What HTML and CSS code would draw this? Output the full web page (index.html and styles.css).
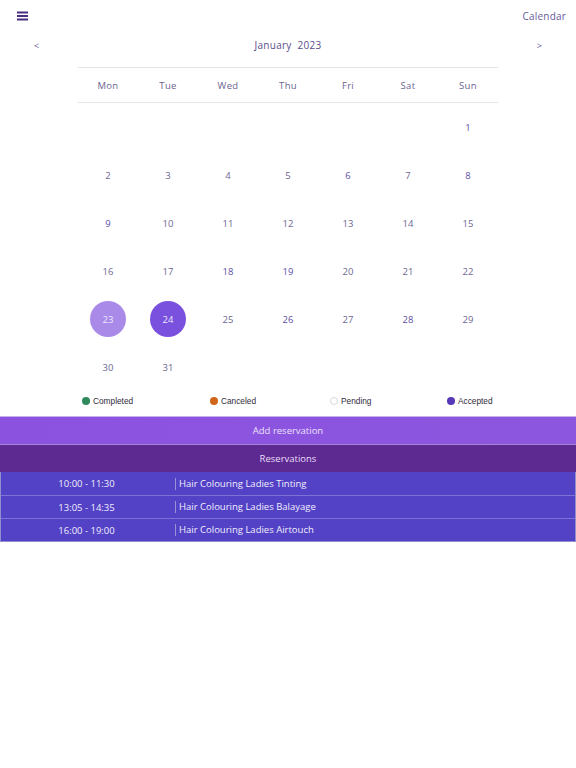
FILE: index.html
```html
<!DOCTYPE html>
<html>
<head>
<meta charset="utf-8">
<link rel="stylesheet" href="styles.css">
</head>
<body>
<header class="topbar">
  <svg class="menu" width="12" height="10" viewBox="0 0 12 10"><rect x="0" y="0.5" width="11" height="2" fill="#4b2f80"/><rect x="0" y="4" width="11" height="2" fill="#4b2f80"/><rect x="0" y="7.5" width="11" height="2" fill="#4b2f80"/></svg>
  <span class="title">Calendar</span>
</header>
<div class="monthnav">
  <span class="arrow">&lt;</span>
  <span class="month">January&nbsp;&nbsp;2023</span>
  <span class="arrow">&gt;</span>
</div>
<div class="cal">
  <div class="head">
    <span>Mon</span><span>Tue</span><span>Wed</span><span>Thu</span><span>Fri</span><span>Sat</span><span>Sun</span>
  </div>
  <div class="days">
    <span></span><span></span><span></span><span></span><span></span><span></span><span class="p">1</span>
    <span>2</span><span>3</span><span>4</span><span>5</span><span class="p">6</span><span>7</span><span class="p">8</span>
    <span class="p">9</span><span>10</span><span>11</span><span>12</span><span>13</span><span>14</span><span>15</span>
    <span>16</span><span>17</span><span class="p">18</span><span class="p">19</span><span>20</span><span>21</span><span>22</span>
    <span><i class="sel light">23</i></span><span><i class="sel dark">24</i></span><span>25</span><span class="p">26</span><span>27</span><span class="p">28</span><span>29</span>
    <span>30</span><span>31</span><span></span><span></span><span></span><span></span><span></span>
  </div>
</div>
<div class="legend">
  <span class="item"><i class="dot green"></i>Completed</span>
  <span class="item"><i class="dot orange"></i>Canceled</span>
  <span class="item"><i class="dot white"></i>Pending</span>
  <span class="item"><i class="dot blue"></i>Accepted</span>
</div>
<div class="addbar">Add reservation</div>
<div class="resbar">Reservations</div>
<div class="list">
  <div class="row"><span class="time">10:00 - 11:30</span><span class="name">Hair Colouring Ladies Tinting</span></div>
  <div class="row"><span class="time">13:05 - 14:35</span><span class="name">Hair Colouring Ladies Balayage</span></div>
  <div class="row"><span class="time">16:00 - 19:00</span><span class="name">Hair Colouring Ladies Airtouch</span></div>
</div>
</body>
</html>
```
FILE: styles.css
```css
* { box-sizing: border-box; }
body {
  margin: 0;
  background: #fff;
  font-family: "Open Sans", "Liberation Sans", sans-serif;
  color: #5b4d8a;
}
.topbar {
  display: flex;
  justify-content: space-between;
  align-items: center;
  height: 32px;
  padding: 0 10px 0 17px;
}
.menu { display: block; }
.title { font-size: 10px; color: #6a5a9c; letter-spacing: 0.2px; }
.monthnav {
  display: flex;
  justify-content: space-between;
  align-items: center;
  height: 26px;
  padding: 0 34px 0 34px;
  font-size: 10px;
  color: #5b4d8a;
}
.arrow { font-size: 9px; color: #6a5a9c; }
.month { letter-spacing: 0.3px; }
.cal {
  width: 420px;
  margin: 9px 0 0 78px;
}
.head {
  display: grid;
  grid-template-columns: repeat(7, 60px);
  height: 36px;
  align-items: center;
  border-top: 1px solid #e4e4ea;
  border-bottom: 1px solid #e4e4ea;
  font-size: 9.5px;
  color: #6c6390;
}
.head span { text-align: center; letter-spacing: 0.3px; }
.days {
  display: grid;
  grid-template-columns: repeat(7, 60px);
  grid-auto-rows: 48px;
  font-size: 9.5px;
  color: #6e6790;
}
.days span {
  display: flex;
  align-items: center;
  justify-content: center;
}
.days span.p { color: #5e4fa8; }
.sel {
  font-style: normal;
  width: 36px;
  height: 36px;
  border-radius: 50%;
  display: flex;
  align-items: center;
  justify-content: center;
  color: #efe9fb;
}
.sel.light { background: #a98ae9; }
.sel.dark { background: #7a50de; }
.legend {
  display: grid;
  grid-template-columns: 128px 120px 117px 120px;
  padding-left: 82px;
  height: 20px;
  align-items: center;
  font-family: "Liberation Sans", "DejaVu Sans", sans-serif;
  font-size: 8.3px;
  color: #2f2b3a;
}
.item { display: flex; align-items: center; }
.dot {
  display: inline-block;
  width: 8px;
  height: 8px;
  border-radius: 50%;
  margin-right: 3px;
}
.dot.green { background: #2e8a5c; }
.dot.orange { background: #d0661a; }
.dot.white { background: #fff; border: 1px solid #d8d8d8; }
.dot.blue { background: #5738b8; }
.addbar {
  height: 28px;
  display: flex;
  align-items: center;
  justify-content: center;
  background: linear-gradient(90deg, #8b52e0, #8c56de);
  border-top: 1px solid #c8b0ee;
  color: #ece2fb;
  font-size: 9.5px;
  margin-top: 5px;
}
.resbar {
  height: 28px;
  display: flex;
  align-items: center;
  justify-content: center;
  background: #5d2a92;
  border-top: 1px solid #a583d8;
  color: #eadff6;
  font-size: 9.5px;
}
.list {
  border: 1px solid #8f8fd0;
  border-top: none;
  background: #5342c6;
}
.row {
  display: flex;
  align-items: center;
  height: 23px;
  border-top: 1px solid #7c74d4;
  color: #f1eefc;
  font-size: 9.5px;
}
.row:first-child { border-top: none; height: 23px; }
.time {
  width: 174px;
  text-align: center;
  padding-right: 3px;
}
.name {
  border-left: 1px solid #9a92d8;
  padding-left: 3px;
  line-height: 12px;
}
```
